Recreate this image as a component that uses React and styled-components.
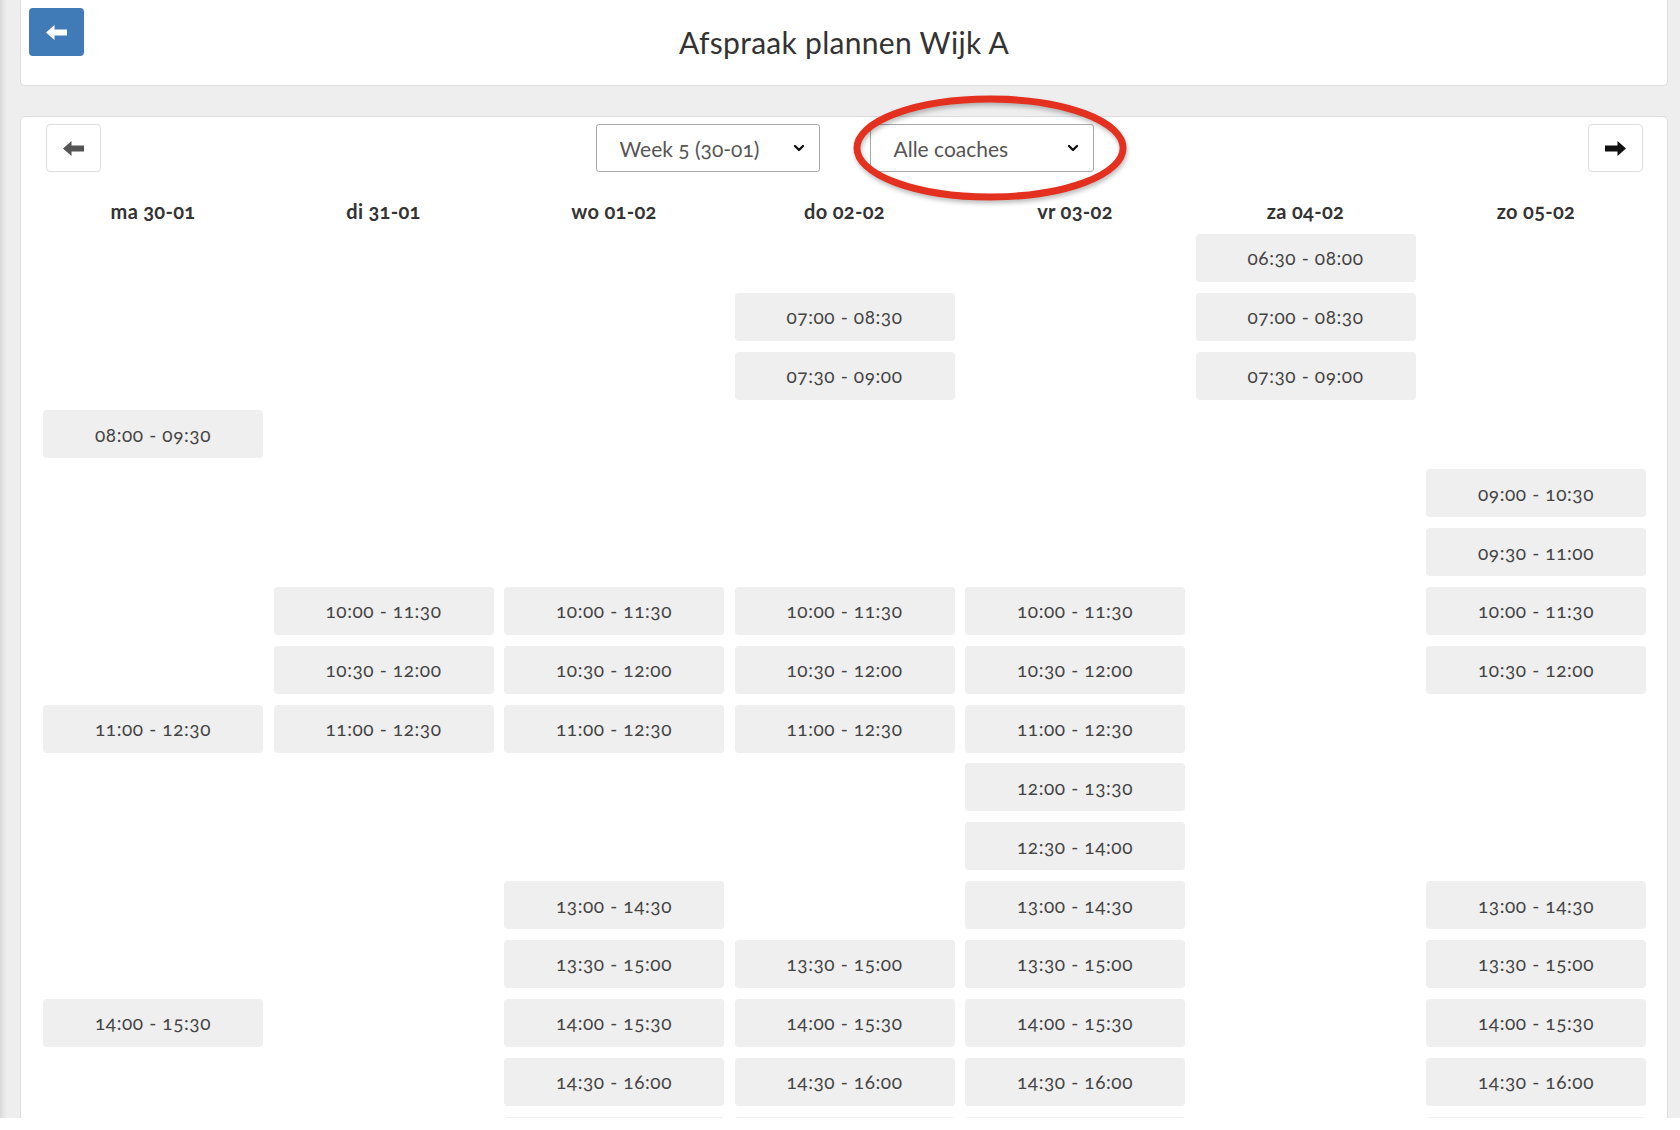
import React from 'react';
import styled, { createGlobalStyle } from 'styled-components';
import { ChevronDown } from 'lucide-react';

const days = ['ma 30-01', 'di 31-01', 'wo 01-02', 'do 02-02', 'vr 03-02', 'za 04-02', 'zo 05-02'];

// each row: start time and the day columns (1 = ma ... 7 = zo) that have a slot
const rows = [
    ['06:30', [6]],
    ['07:00', [4, 6]],
    ['07:30', [4, 6]],
    ['08:00', [1]],
    ['09:00', [7]],
    ['09:30', [7]],
    ['10:00', [2, 3, 4, 5, 7]],
    ['10:30', [2, 3, 4, 5, 7]],
    ['11:00', [1, 2, 3, 4, 5]],
    ['12:00', [5]],
    ['12:30', [5]],
    ['13:00', [3, 5, 7]],
    ['13:30', [3, 4, 5, 7]],
    ['14:00', [1, 3, 4, 5, 7]],
    ['14:30', [3, 4, 5, 7]],
    ['15:00', [3, 4, 5, 7]],
]

const plus90 = t => {
    const [h, m] = t.split(':').map(Number)
    const total = h * 60 + m + 90
    const pad = n => String(n).padStart(2, '0')
    return `${pad(Math.floor(total / 60))}:${pad(total % 60)}`
}

const Arrow = ({ dir = 'left', color = '#fff' }) => (
    <svg width="21" height="15" viewBox="0 0 21 15" style={{ transform: dir === 'right' ? 'scaleX(-1)' : 'none' }}>
        <path d="M0 7.5 L8.5 0 L8.5 4.6 L21 4.6 L21 10.4 L8.5 10.4 L8.5 15 Z" fill={color}/>
    </svg>
)

const App = () => {
    return (
        <Page>
            <GlobalStyle/>
            <HeaderCard>
                <BackButton><Arrow color="#fff"/></BackButton>
                <Title>Afspraak plannen Wijk A</Title>
                <span/>
            </HeaderCard>
            <PlannerCard>
                <Toolbar>
                    <NavButton><Arrow color="#555"/></NavButton>
                    <Selects>
                        <Select>
                            <span>Week 5 (30-01)</span>
                            <ChevronDown size={16} strokeWidth={3.5} color="#111"/>
                        </Select>
                        <Highlight>
                            <Select>
                                <span>Alle coaches</span>
                                <ChevronDown size={16} strokeWidth={3.5} color="#111"/>
                            </Select>
                            <Ring viewBox="0 0 280 108" preserveAspectRatio="none">
                                <ellipse cx="140" cy="54" rx="135" ry="49" fill="none" stroke="#e3301f" strokeWidth="7"/>
                            </Ring>
                        </Highlight>
                    </Selects>
                    <NavButton><Arrow dir="right" color="#111"/></NavButton>
                </Toolbar>
                <Schedule>
                    {days.map((d, i) => (
                        <DayHead key={d} col={i + 1}>{d}</DayHead>
                    ))}
                    {rows.map(([start, cols], r) =>
                        cols.map(c => (
                            <Slot key={start + c} col={c} row={r + 2}>
                                {start} - {plus90(start)}
                            </Slot>
                        ))
                    )}
                </Schedule>
            </PlannerCard>
        </Page>
    )
}

const GlobalStyle = createGlobalStyle`
    html, body {
        margin: 0;
        padding: 0;
        background: #fff;
    }
    body {
        font-family: Lato, "Open Sans", "Liberation Sans", sans-serif;
        color: #333;
    }
`
const Page = styled.div`
    height: 1118px;
    overflow: hidden;
    box-sizing: border-box;
    padding: 0 12px 0 20px;
    background: linear-gradient(to right, #d9d8d8 0, #e8e7e7 4px, #efeeee 8px, #efeeee 100%);
    display: flex;
    flex-direction: column;
    gap: 30px;
`
const HeaderCard = styled.header`
    flex-shrink: 0;
    height: 86px;
    box-sizing: border-box;
    background: #fff;
    border: 1px solid #dcdcdc;
    border-top: none;
    border-radius: 0 0 5px 5px;
    padding: 8px 8px 0 8px;
    display: grid;
    grid-template-columns: 55px 1fr 55px;
    align-items: start;
`
const BackButton = styled.button`
    width: 55px;
    height: 48px;
    border: none;
    border-radius: 4px;
    background: #407ab7;
    display: flex;
    align-items: center;
    justify-content: center;
    padding: 0;
    cursor: pointer;
`
const Title = styled.h1`
    margin: 0;
    padding-top: 17px;
    text-align: center;
    font-size: 30px;
    line-height: 34px;
    font-weight: 400;
    color: #333;
    letter-spacing: 0.3px;
`
const PlannerCard = styled.section`
    flex: 1 0 auto;
    background: #fff;
    border: 1px solid #dcdcdc;
    border-bottom: none;
    border-radius: 5px 5px 0 0;
    padding: 7px 21px 0 22px;
`
const Toolbar = styled.div`
    display: flex;
    justify-content: space-between;
    align-items: center;
    padding: 0 3px;
`
const NavButton = styled.button`
    width: 55px;
    height: 48px;
    background: #fff;
    border: 1px solid #dedede;
    border-radius: 4px;
    display: flex;
    align-items: center;
    justify-content: center;
    padding: 0;
    cursor: pointer;
`
const Selects = styled.div`
    display: flex;
    gap: 50px;
`
const Select = styled.div`
    width: 224px;
    height: 48px;
    box-sizing: border-box;
    border: 1px solid #a8a8a8;
    border-radius: 3px;
    background: #fff;
    display: flex;
    align-items: center;
    justify-content: space-between;
    padding: 0 12px 0 23px;
    font-size: 21px;
    color: #555;
    font-variant-numeric: oldstyle-nums;
`
const Highlight = styled.div`
    position: relative;
`
const Ring = styled.svg`
    position: absolute;
    left: -18px;
    top: -30px;
    width: 276px;
    height: 108px;
    pointer-events: none;
    overflow: visible;
    filter: drop-shadow(1px 3px 2px rgba(0, 0, 0, 0.25));
`
const Schedule = styled.div`
    margin-top: 28px;
    display: grid;
    grid-template-columns: repeat(7, 1fr);
    grid-template-rows: 23px;
    grid-auto-rows: 48px;
    column-gap: 10.5px;
    row-gap: 10.85px;
`
const DayHead = styled.div`
    grid-column: ${p => p.col};
    grid-row: 1;
    text-align: center;
    font-size: 20px;
    line-height: 23px;
    font-weight: 700;
    color: #333;
    letter-spacing: 0.3px;
    font-variant-numeric: oldstyle-nums;
`
const Slot = styled.div`
    grid-column: ${p => p.col};
    grid-row: ${p => p.row};
    background: #efefef;
    border-radius: 4px;
    display: flex;
    align-items: center;
    justify-content: center;
    font-size: 19px;
    letter-spacing: 0.6px;
    color: #444;
    font-variant-numeric: oldstyle-nums;
`

export default App;
